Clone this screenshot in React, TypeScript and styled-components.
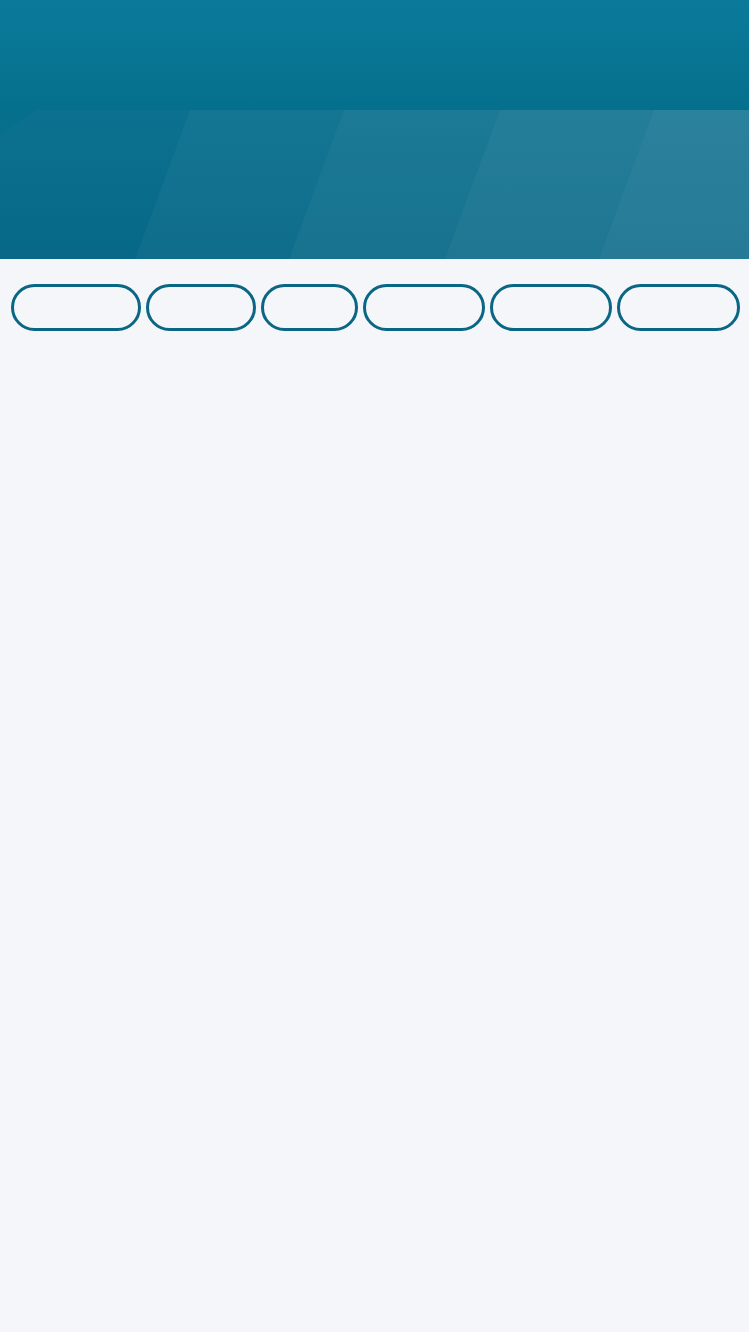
import React from "react";
import styled, { createGlobalStyle } from "styled-components";

const GlobalStyle = createGlobalStyle`
  html, body {
    margin: 0;
    padding: 0;
    background: #f4f6fa;
    font-family: "Liberation Sans", Arial, sans-serif;
  }
  #root {
    min-height: 1332px;
    background: #f4f6fa;
  }
`;

const Page = styled.div`
  display: flex;
  flex-direction: column;
  width: 749px;
  min-height: 1332px;
  background: #f4f6fa;
`;

const Header = styled.header`
  display: flex;
  flex-direction: column;
  height: 259px;
  background: linear-gradient(180deg, #0b7a9a 0%, #05708d 42%, #0a6b89 100%);
`;

const TopBar = styled.div`
  height: 110px;
  flex: none;
`;

const Band = styled.div`
  position: relative;
  flex: 1;
  overflow: hidden;
`;

const BandArt = styled.svg`
  display: block;
  width: 100%;
  height: 100%;
`;

const Tabs = styled.nav`
  display: flex;
  gap: 5px;
  padding: 25px 10px 0 11px;
`;

const Pill = styled.button<{ $w: number }>`
  flex: none;
  width: ${(p) => p.$w}px;
  height: 47px;
  border: 3px solid #0a6683;
  border-radius: 24px;
  background: transparent;
  padding: 0;
  font-family: "Liberation Sans", Arial, sans-serif;
  font-size: 14px;
  color: #0a6683;
  cursor: pointer;
`;

const widths = [130, 110, 97, 122, 122, 123];

export default function App() {
  const H = 149;
  const slant = 55;
  const stripes = [190, 344, 500, 654];
  return (
    <>
      <GlobalStyle />
      <Page>
        <Header>
          <TopBar />
          <Band>
            <BandArt viewBox={`0 0 749 ${H}`} preserveAspectRatio="none">
              <defs>
                <linearGradient id="bandg" x1="0" y1="0" x2="0" y2="1">
                  <stop offset="0" stopColor="#0c7190" />
                  <stop offset="1" stopColor="#076887" />
                </linearGradient>
              </defs>
              <polygon points={`36,0 749,0 749,${H} 0,${H} 0,26`} fill="url(#bandg)" />
              {stripes.map((x) => (
                <polygon
                  key={x}
                  points={`${x},0 749,0 749,${H} ${x - slant},${H}`}
                  fill="rgba(255,255,255,0.036)"
                />
              ))}
            </BandArt>
          </Band>
        </Header>
        <Tabs>
          {widths.map((w, i) => (
            <Pill key={i} $w={w} type="button" aria-label={`tab ${i + 1}`} />
          ))}
        </Tabs>
      </Page>
    </>
  );
}
